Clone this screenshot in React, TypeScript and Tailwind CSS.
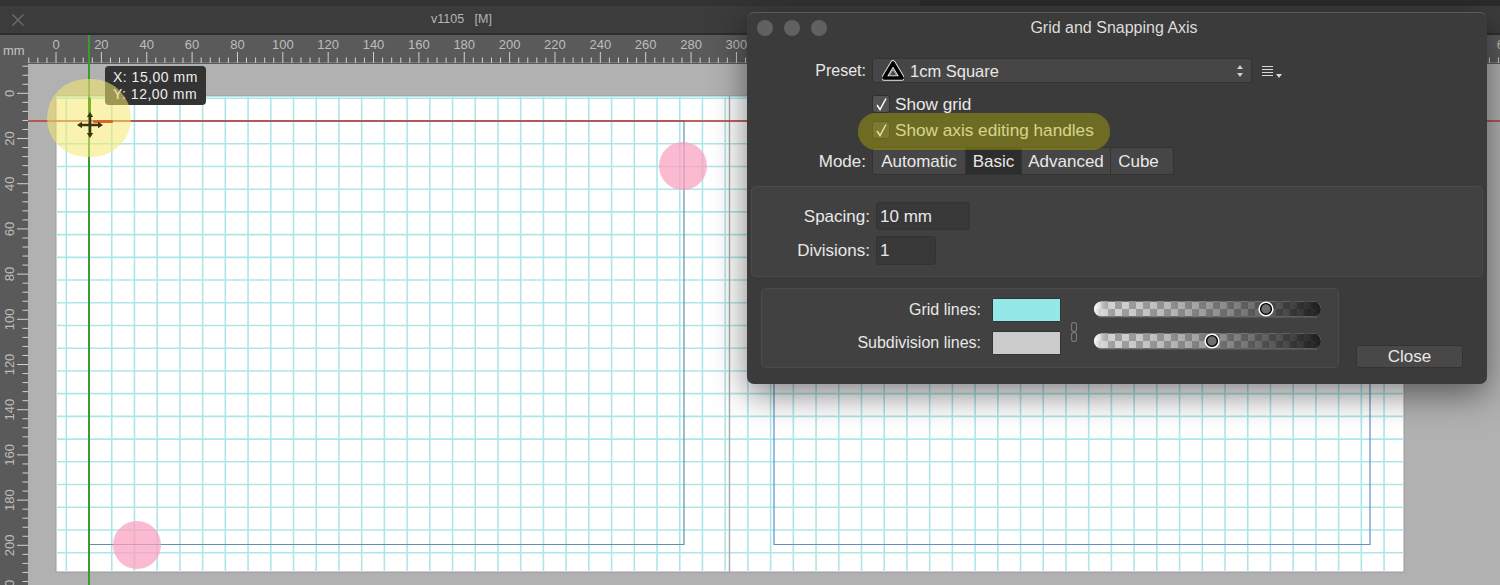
const sans = "font-['Liberation_Sans',Arial,sans-serif]";
const PX = 22.72; // 10mm on the sheet
const RULER_X = 45.36; // 20mm on the top ruler
const RULER_Y = 45.2; // 20mm on the left ruler

const range = (n: number) => Array.from({ length: n }, (_, i) => i);

function TopRuler() {
  return (
    <svg width={1472} height={29} viewBox="28 35 1472 29" className="block">
      <line x1={28} x2={1500} y1={62.5} y2={62.5} stroke="#7a7a7a" />
      {range(165).map((i) => {
        const x = 28.8 + i * (RULER_X / 5);
        const major = (i - 3) % 5 === 0;
        return <line key={i} x1={x} x2={x} y1={major ? 52 : 57.5} y2={63} stroke="#d2d2d2" />;
      })}
      {range(33).map((i) => (
        <text key={i} x={56 + i * RULER_X} y={49} textAnchor="middle" fontSize={13} fill="#bdbdbd" fontFamily="Liberation Sans">
          {i * 20}
        </text>
      ))}
    </svg>
  );
}

function LeftRuler() {
  return (
    <svg width={28} height={521} viewBox="0 64 28 521" className="block">
      {range(60).map((i) => {
        const y = 66.2 + i * (RULER_Y / 5);
        const major = (i - 3) % 5 === 0;
        return <line key={i} x1={major ? 17 : 22.5} x2={28} y1={y} y2={y} stroke="#d2d2d2" />;
      })}
      {range(12).map((i) => {
        const y = 93.3 + i * RULER_Y;
        return (
          <text key={i} transform={`translate(14 ${y}) rotate(-90)`} textAnchor="middle" fontSize={13} fill="#bdbdbd" fontFamily="Liberation Sans">
            {i * 20}
          </text>
        );
      })}
    </svg>
  );
}

function Sheet() {
  return (
    <svg width={1472} height={521} viewBox="28 64 1472 521" className="block">
      <rect x={56} y={96} width={1348} height={476} fill="#fff" stroke="#9a9a9a" />
      {range(60).map((i) => {
        const x = 66.3 + i * PX;
        if (x > 1404) return null;
        return <line key={i} x1={x} x2={x} y1={96} y2={572} stroke="#aee6e8" strokeWidth={1.6} />;
      })}
      {range(21).map((i) => {
        const y = 98.3 + i * PX;
        return <line key={i} x1={56} x2={1404} y1={y} y2={y} stroke="#aee6e8" strokeWidth={1.6} />;
      })}
      <line x1={56} x2={1404} y1={96.5} y2={96.5} stroke="#aee6e8" />
      <line x1={729.5} x2={729.5} y1={96} y2={572} stroke="#a9a9a9" strokeWidth={1.4} />
      <path d="M89 121H684V544.5H89" fill="none" stroke="#5f93ad" strokeWidth={1.2} />
      <path d="M774 121H1370V544.5H774Z" fill="none" stroke="#6390bf" strokeWidth={1.2} />
      <line x1={28} x2={1500} y1={121} y2={121} stroke="#b83a2e" strokeWidth={1.4} />
    </svg>
  );
}

function MoveCursor() {
  return (
    <svg width={26} height={26} viewBox="0 0 26 26" className="absolute left-[77px] top-[112px]">
      <path d="M13 3V23M3 13H23" stroke="#38360e" strokeWidth={2.6} />
      <path d="M13 0l3.2 5h-6.4zM13 26l3.2-5h-6.4zM0 13l5-3.2v6.4zM26 13l-5-3.2v6.4z" fill="#38360e" />
    </svg>
  );
}

function AffinityMark() {
  return (
    <svg width={22} height={22} viewBox="0 0 22 22">
      <path d="M11 3L20 18H2Z" fill="none" stroke="#e8e8e8" strokeWidth={5.5} strokeLinejoin="round" />
      <path d="M11 3L20 18H2Z" fill="none" stroke="#000" strokeWidth={3.6} strokeLinejoin="round" />
      <path d="M11 9.5L14.5 15.5H7.5Z" fill="#444" stroke="#bbb" strokeWidth={0.8} />
    </svg>
  );
}

function Check() {
  return (
    <div className="flex h-[18px] w-[18px] shrink-0 items-center justify-center rounded-[3px] border border-[#2f2f2f] bg-[#535354]">
      <svg width={13} height={14} viewBox="0 0 13 14">
        <path d="M2 8L5 12.5L11 1.5" fill="none" stroke="#fff" strokeWidth={1.5} />
      </svg>
    </div>
  );
}

function Slider({ id, pos }: { id: string; pos: number }) {
  return (
    <svg width={227} height={17} viewBox="0 0 227 17" className="block">
      <defs>
        <pattern id={`${id}-c`} width={14} height={14} patternUnits="userSpaceOnUse" y={1}>
          <rect width={14} height={14} fill="#9c9c9c" />
          <rect width={7} height={7} fill="#d8d8d8" />
          <rect x={7} y={7} width={7} height={7} fill="#d8d8d8" />
        </pattern>
        <linearGradient id={`${id}-g`}>
          <stop offset="0" stopColor="#fff" stopOpacity={1} />
          <stop offset="0.08" stopColor="#aaa" stopOpacity={0.15} />
          <stop offset="0.6" stopColor="#333" stopOpacity={0.5} />
          <stop offset="1" stopColor="#111" stopOpacity={0.92} />
        </linearGradient>
      </defs>
      <rect y={0.5} width={227} height={15} rx={7.5} fill={`url(#${id}-c)`} />
      <rect y={0.5} width={227} height={15} rx={7.5} fill={`url(#${id}-g)`} />
      <path d="M4 16H223" stroke="#666" />
      <circle cx={pos} cy={8} r={7.6} fill="#fff" />
      <circle cx={pos} cy={8} r={5.4} fill="#6e6e6e" stroke="#000" strokeWidth={1.4} />
    </svg>
  );
}

function Dialog() {
  const modes = [
    { name: 'Automatic', w: 'w-[93px]', extra: '' },
    { name: 'Basic', w: 'w-[56px]', extra: 'bg-[#2d2d2d]' },
    { name: 'Advanced', w: 'w-[89px]', extra: '' },
    { name: 'Cube', w: 'w-[62px]', extra: 'pr-[7px]' },
  ];

  return (
    <div className={`${sans} absolute left-[747px] top-[12px] flex h-[372px] w-[740px] flex-col rounded-[7px] border-t border-[#5a5a5a] bg-[#3b3b3b] text-[17px] text-[#e8e8e8] shadow-[0_10px_34px_rgba(0,0,0,0.5)]`}>
      {/* title bar */}
      <div className="relative flex h-[29px] shrink-0 items-center">
        <div className="ml-[10px] flex gap-[11px]">
          <div className="h-[16px] w-[16px] rounded-full bg-[#616161]" />
          <div className="h-[16px] w-[16px] rounded-full bg-[#616161]" />
          <div className="h-[16px] w-[16px] rounded-full bg-[#616161]" />
        </div>
        <div className="absolute inset-x-0 top-[3px] pr-[6px] text-center text-[16px] text-[#dcdcdc]">Grid and Snapping Axis</div>
      </div>

      {/* preset */}
      <div className="mt-[16px] flex h-[25px] items-center">
        <div className="w-[119px] pt-[1px] text-right text-[16px]">Preset:</div>
        <div className="ml-[6px] flex h-[25px] w-[380px] items-center rounded-[3px] border border-[#333] bg-[#464646] pl-[9px] pr-[7px]">
          <AffinityMark />
          <span className="ml-[6px] pt-[1px] text-[16.5px]">1cm Square</span>
          <svg width={8} height={14} viewBox="0 0 8 14" className="ml-auto">
            <path d="M4 1l3 4H1zM4 13l3-4H1z" fill="#d0d0d0" />
          </svg>
        </div>
        <svg width={22} height={14} viewBox="0 0 22 14" className="ml-[9px]">
          <path d="M1 2.5H12M1 5.5H12M1 8.5H12M1 11.5H12" stroke="#d8d8d8" strokeWidth={1.2} />
          <path d="M15 10h6l-3 4z" fill="#d8d8d8" />
        </svg>
      </div>

      {/* checkboxes */}
      <div className="mt-[12px] ml-[125px] flex h-[18px] items-center gap-[5px]">
        <Check />
        <span className="pt-[1px] text-[17.2px]">Show grid</span>
      </div>
      <div className="mt-[8px] ml-[125px] flex h-[18px] items-center gap-[5px]">
        <Check />
        <span className="pt-[1px] text-[17.2px]">Show axis editing handles</span>
      </div>

      {/* mode */}
      <div className="mt-[8px] flex h-[28px] items-center">
        <div className="w-[119px] pt-[2px] text-right">Mode:</div>
        <div className="ml-[6px] flex h-[28px] overflow-hidden rounded-[3px] border border-[#333] bg-[#464646]">
          {modes.map((m) => (
            <div key={m.name} className={`${m.w} ${m.extra} flex items-center justify-center border-r border-[#333] pt-[1px] last:border-r-0`}>
              {m.name}
            </div>
          ))}
        </div>
      </div>

      {/* spacing */}
      <div className="mx-[4px] mt-[11px] flex h-[91px] flex-col rounded-[5px] border border-[#4b4b4b] bg-[#414141] pt-[15px]">
        <div className="flex h-[28px] items-center">
          <div className="w-[118px] pt-[1px] text-right">Spacing:</div>
          <div className="ml-[6px] flex h-[28px] w-[94px] items-center rounded-[3px] border border-[#333] bg-[#383838] pl-[3px] pt-[1px]">10 mm</div>
        </div>
        <div className="mt-[6px] flex h-[29px] items-center">
          <div className="w-[118px] pt-[1px] text-right">Divisions:</div>
          <div className="ml-[6px] flex h-[29px] w-[60px] items-center rounded-[3px] border border-[#333] bg-[#383838] pl-[3px] pt-[1px]">1</div>
        </div>
      </div>

      {/* line colours */}
      <div className="mt-[11px] flex items-end">
        <div className="ml-[14px] flex h-[80px] w-[578px] items-start rounded-[5px] border border-[#4b4b4b] bg-[#414141] pt-[9px] text-[16px]">
          <div className="flex flex-col gap-[9px]">
            <div className="flex h-[24px] items-center">
              <div className="w-[219px] text-right">Grid lines:</div>
              <div className="ml-[11px] h-[24px] w-[69px] rounded-[1px] border border-[#333] bg-[#95e8e8]" />
            </div>
            <div className="flex h-[24px] items-center">
              <div className="w-[219px] text-right">Subdivision lines:</div>
              <div className="ml-[11px] h-[24px] w-[69px] rounded-[1px] border border-[#333] bg-[#cbcbcb]" />
            </div>
          </div>
          <svg width={33} height={20} viewBox="0 0 33 20" className="mt-[24px] shrink-0">
            <rect x={10.5} y={0.5} width={5} height={9} rx={2.5} fill="none" stroke="#7a7a7a" strokeWidth={1.2} />
            <rect x={10.5} y={10.5} width={5} height={9} rx={2.5} fill="none" stroke="#7a7a7a" strokeWidth={1.2} />
          </svg>
          <div className="mt-[3px] flex flex-col gap-[15px]">
            <Slider id="grid" pos={172} />
            <Slider id="sub" pos={118} />
          </div>
        </div>
        <div className="ml-[17px] flex h-[23px] w-[107px] items-center justify-center rounded-[3px] border border-[#333] bg-[#484848] pt-[1px]">Close</div>
      </div>

      {/* highlight over the second checkbox */}
      <div className="absolute left-[111px] top-[100px] h-[37px] w-[252px] rounded-[18px] bg-[rgba(187,182,0,0.4)]" />
    </div>
  );
}

export default function App() {
  return (
    <div className={`${sans} relative flex h-[585px] w-[1500px] flex-col overflow-hidden bg-[#b1b1b1]`}>
      {/* window chrome */}
      <div className="flex h-[35px] shrink-0 flex-col bg-[#3c3c3c]">
        <div className="flex h-[6px] shrink-0">
          <div className="w-[920px] bg-[#333]" />
          <div className="flex-1 bg-[#2b2b2b]" />
        </div>
        <div className="relative flex flex-1 items-center border-b-2 border-[#2e2e2e]">
          <svg width={14} height={14} viewBox="0 0 14 14" className="ml-[11px]">
            <path d="M1.5 1.5L12.5 12.5M12.5 1.5L1.5 12.5" stroke="#6e6e6e" strokeWidth={1.3} />
          </svg>
          <span className="ml-[406px] whitespace-pre text-[12.5px] text-[#b4b4b4]">v1105   [M]</span>
        </div>
      </div>

      {/* ruler row */}
      <div className="flex h-[29px] shrink-0 bg-[#5a5a5a]">
        <div className="w-[28px] pl-[3px] pt-[8px] text-[13px] leading-[15px] text-[#c4c4c4]">mm</div>
        <TopRuler />
      </div>

      {/* left ruler and sheet */}
      <div className="flex flex-1">
        <div className="w-[28px] bg-[#5a5a5a]">
          <LeftRuler />
        </div>
        <Sheet />
      </div>

      {/* guide */}
      <div className="absolute left-[88px] top-[35px] h-[550px] w-[1.5px] bg-[#3d9a32]" />

      {/* tap markers */}
      <div className="absolute left-[659px] top-[142px] h-[48px] w-[48px] rounded-full bg-[rgba(250,160,190,0.72)]" />
      <div className="absolute left-[113px] top-[521px] h-[48px] w-[48px] rounded-full bg-[rgba(250,160,190,0.72)]" />

      {/* position tooltip */}
      <div className="absolute left-[105px] top-[66px] h-[39px] w-[101px] rounded-[4px] bg-[#333] pl-[8px] pt-[3px] text-[14px] leading-[17px] tracking-[0.5px] text-[#eeeeee]">
        <div>X: 15,00 mm</div>
        <div>Y: 12,00 mm</div>
      </div>
      <div className="absolute left-[47px] top-[79px] h-[78px] w-[84px] rounded-full bg-[rgba(245,232,110,0.55)]" />

      {/* axis handles sit above the highlight */}
      <div className="absolute left-[87.5px] top-[97px] h-[17px] w-[3.5px] rounded-[2px] bg-[#78b52a]" />
      <div className="absolute left-[93px] top-[119.5px] h-[3px] w-[20px] rounded-[1px] bg-[#d8662a]" />
      <MoveCursor />

      <Dialog />
    </div>
  );
}
